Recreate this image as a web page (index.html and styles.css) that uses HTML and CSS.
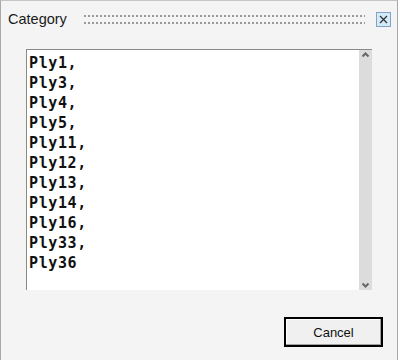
FILE: index.html
```html
<!DOCTYPE html>
<html>
<head>
<meta charset="utf-8">
<link rel="stylesheet" href="styles.css">
</head>
<body>
<div class="window">
  <div class="titlebar">
    <span class="title">Category</span>
    <div class="grip"></div>
    <div class="close">
      <svg width="13" height="13" viewBox="0 0 13 13"><path d="M3 3 L10 10 M10 3 L3 10" stroke="#333" stroke-width="1.3" fill="none"/></svg>
    </div>
  </div>
  <div class="content">
    <div class="listbox">
      <div class="items">
        <div>Ply1,</div>
        <div>Ply3,</div>
        <div>Ply4,</div>
        <div>Ply5,</div>
        <div>Ply11,</div>
        <div>Ply12,</div>
        <div>Ply13,</div>
        <div>Ply14,</div>
        <div>Ply16,</div>
        <div>Ply33,</div>
        <div>Ply36</div>
      </div>
      <div class="scrollbar">
        <svg class="arrow" width="13" height="10" viewBox="0 0 13 10"><path d="M3.5 6.5 L6.5 3.5 L9.5 6.5" stroke="#666" stroke-width="2" fill="none"/></svg>
        <svg class="arrow" width="13" height="10" viewBox="0 0 13 10"><path d="M3.5 3.5 L6.5 6.5 L9.5 3.5" stroke="#666" stroke-width="2" fill="none"/></svg>
      </div>
    </div>
    <div class="buttons">
      <button class="btn">Cancel</button>
    </div>
  </div>
</div>
</body>
</html>
```
FILE: styles.css
```css
html, body {
  margin: 0;
  padding: 0;
  background: #ffffff;
}
.window {
  width: 396px;
  height: 359px;
  background: #f4f4f4;
  border-left: 1px solid #a8a8a8;
  border-top: 1px solid #c4c4c4;
  border-right: 1px solid #a8a8a8;
  display: flex;
  flex-direction: column;
  font-family: "Liberation Sans", Arial, sans-serif;
}
.titlebar {
  height: 36px;
  display: flex;
  align-items: center;
  padding: 0 0 0 7px;
}
.title {
  font-size: 14.5px;
  color: #1a1a1a;
}
.grip {
  flex: 1;
  height: 9px;
  margin: 0 11px 0 17px;
  background-image:
    linear-gradient(to right, #9a9a9a 2px, transparent 2px),
    linear-gradient(to right, #9a9a9a 2px, transparent 2px);
  background-size: 4px 2px, 4px 2px;
  background-position: 0 0, 0 7px;
  background-repeat: repeat-x;
}
.close {
  width: 13px;
  height: 13px;
  border: 1px solid #7fa4c4;
  background: #d3ebf8;
  display: flex;
  margin-right: 6px;
}
.content {
  flex: 1;
  display: flex;
  flex-direction: column;
  padding: 12px 0 0 25px;
}
.listbox {
  width: 345px;
  height: 240px;
  border-top: 1px solid #8a8a8a;
  border-left: 1px solid #8a8a8a;
  background: #ffffff;
  display: flex;
}
.items {
  flex: 1;
  padding: 3px 0 0 2px;
  font-family: "DejaVu Sans Mono", monospace;
  font-weight: bold;
  font-size: 15px;
  letter-spacing: 0.6px;
  line-height: 20px;
  color: #111;
}
.scrollbar {
  width: 13px;
  background: #dcdcdc;
  display: flex;
  flex-direction: column;
  justify-content: space-between;
}
.arrow {
  display: block;
}
.buttons {
  display: flex;
  justify-content: flex-end;
  padding: 27px 14px 0 0;
}
.btn {
  width: 99px;
  height: 30px;
  box-sizing: border-box;
  border: 2px solid #000;
  box-shadow: inset -1px -1px 0 #a0a0a0, inset 1px 1px 0 #ffffff;
  background: #f0f0f0;
  font-family: "Liberation Sans", Arial, sans-serif;
  font-size: 13px;
  color: #111;
  padding: 0;
}
```
